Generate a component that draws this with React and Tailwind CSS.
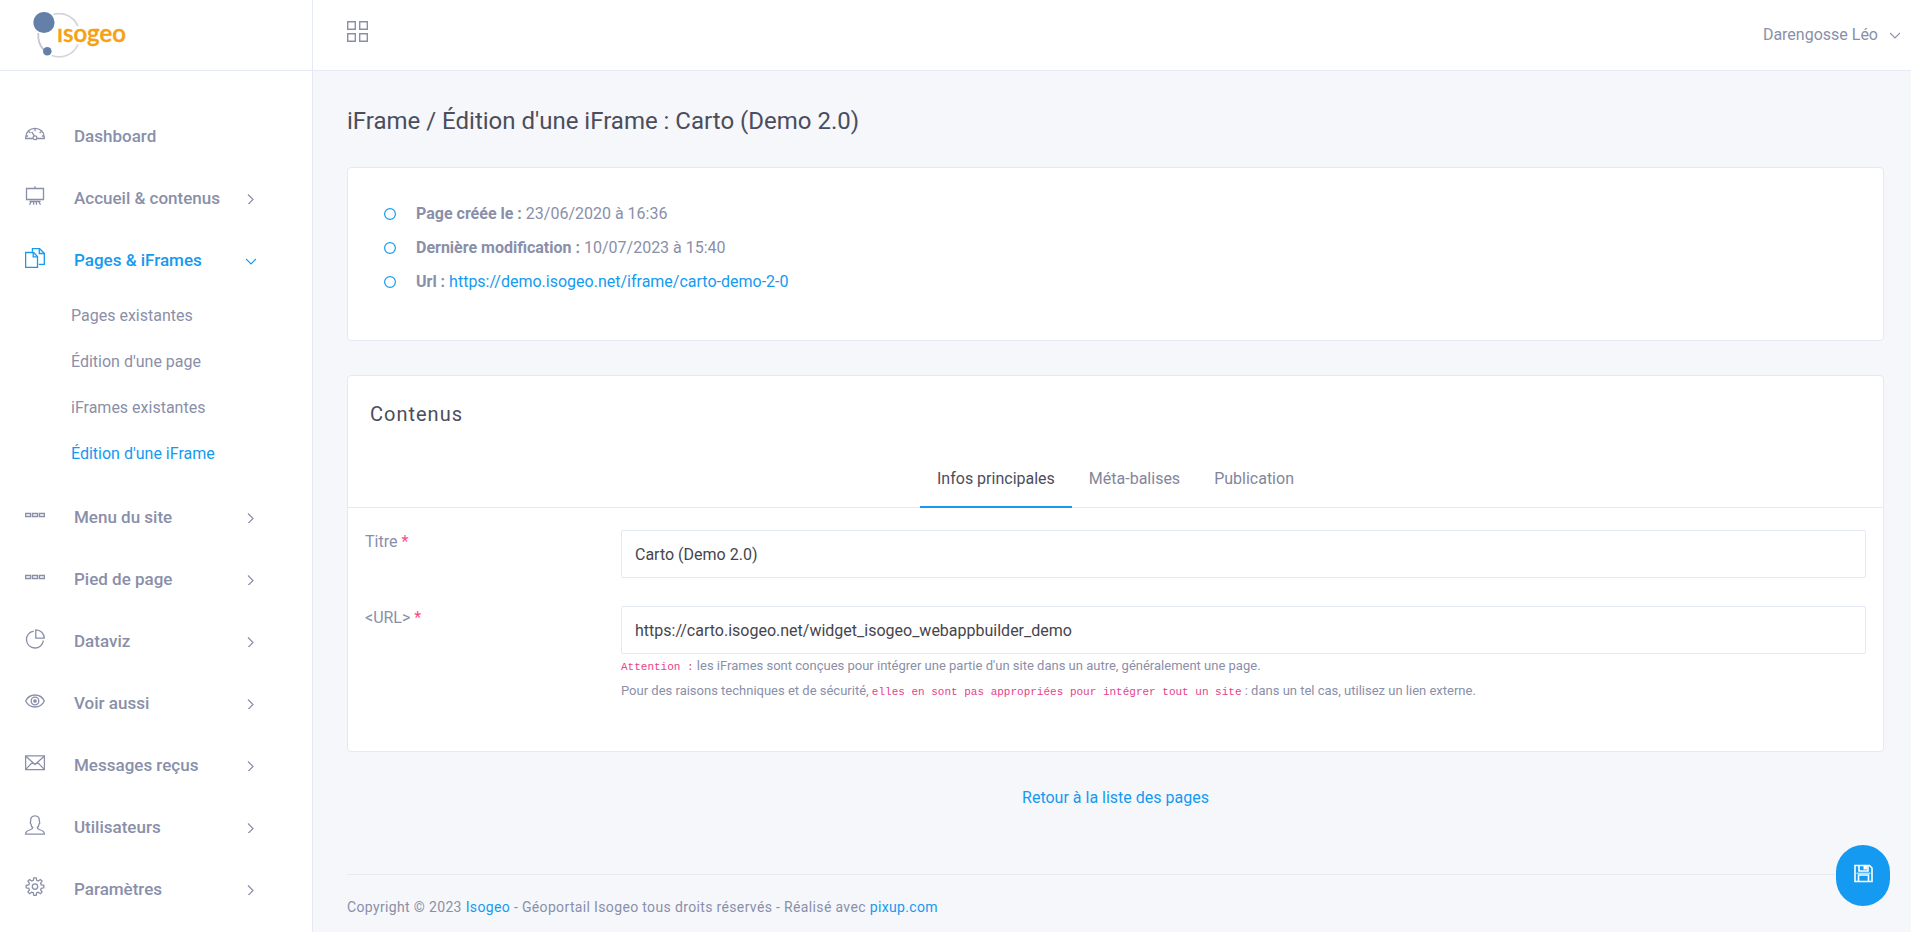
import React, { useState } from "react";
import clsx from "clsx";

function Icon({ children, className = "size-5", viewBox = "0 0 20 20", strokeWidth = "1.3" }) {
  return (
    <svg className={clsx("shrink-0", className)} viewBox={viewBox} fill="none" stroke="currentColor" strokeWidth={strokeWidth} aria-hidden="true">
      {children}
    </svg>
  );
}

const ICONS = {
  gauge: (
    <>
      <path d="M7.9 14.5H.7v-1.2C.7 8 4.9 4.3 10 4.3s9.3 3.7 9.3 9v1.2h-7.2" />
      <circle cx="10" cy="13.7" r="1.9" />
      <path d="M9.3 11.9 6.7 7.8M10 4.5v2.8M3.6 7.5l1.8 1.6M16.4 7.5l-1.8 1.6M1 12h2.2M19 12h-2.2" />
    </>
  ),
  easel: (
    <path d="M1.5 2.5h17v11h-17zM10 .2v2.3M4.5 15.5h11M6.4 15.5l-1.9 3.3M13.6 15.5l1.9 3.3M8.6 15.5v3.3M11.4 15.5v3.3" />
  ),
  pages: (
    <>
      <path d="M.6 4.5h8l3.9 4v10.9H.6z" />
      <path d="M8.2 4.6v4.2h4.2" />
      <path d="M7.4 3.8V.7h7.2l4.7 4.6v11.1h-5.6" />
      <path d="M14.3.9v4.6h4.9" />
    </>
  ),
  menu: <path d="M.6 8.5h5v3h-5zM7.5 8.5h5v3h-5zM14.4 8.5h5v3h-5z" />,
  chart: (
    <>
      <path d="M8.7 2.1a8.5 8.5 0 1 0 9.7 9.4" />
      <path d="M10.8.8v8.4h8.5A8.5 8.5 0 0 0 10.8.8z" />
    </>
  ),
  eye: (
    <>
      <path d="M.7 10C2.5 6.2 5.9 4 10 4s7.5 2.2 9.3 6c-1.8 3.8-5.2 6-9.3 6S2.5 13.8.7 10z" />
      <circle cx="10" cy="10" r="3.8" />
      <circle cx="10" cy="10" r="1.2" fill="currentColor" />
    </>
  ),
  mail: (
    <>
      <path d="M.6 2.8h18.8v13.8H.6z" />
      <path d="m.8 3.2 9.2 8.3 9.2-8.3M.8 16.4l6.6-7M19.2 16.4l-6.6-7" />
    </>
  ),
  user: (
    <path d="M7.8 12.8c-1-.9-1.7-2.3-1.8-3.7-.8-.6-.9-1.6-.4-2.3C5.4 3.2 6.6.8 10 .8s4.6 2.4 4.4 6c.5.7.4 1.7-.4 2.3-.1 1.4-.8 2.8-1.8 3.7.1 1.2 1.3 1.6 3.2 2.2 2.4.7 4 1.8 4 4.2H.6c0-2.4 1.6-3.5 4-4.2 1.9-.6 3.1-1 3.2-2.2z" />
  ),
  gear: (
    <>
      <path d="M8.8.8h2.4l.5 2.6 1.5.6 2.2-1.5 1.7 1.7-1.5 2.2.6 1.5 2.6.5v2.4l-2.6.5-.6 1.5 1.5 2.2-1.7 1.7-2.2-1.5-1.5.6-.5 2.6H8.8l-.5-2.6-1.5-.6-2.2 1.5-1.7-1.7 1.5-2.2-.6-1.5-2.6-.5V8.400l2.600-.5.6-1.500-1.500-2.200 1.700-1.700L6.800 4l1.500-.6z" />
      <circle cx="10" cy="9.6" r="2.7" />
    </>
  ),
};

const NAV = [
  { label: "Dashboard", icon: "gauge", leaf: true },
  { label: "Accueil & contenus", icon: "easel" },
  {
    label: "Pages & iFrames",
    icon: "pages",
    children: ["Pages existantes", "Édition d'une page", "iFrames existantes", "Édition d'une iFrame"],
  },
  { label: "Menu du site", icon: "menu" },
  { label: "Pied de page", icon: "menu" },
  { label: "Dataviz", icon: "chart" },
  { label: "Voir aussi", icon: "eye" },
  { label: "Messages reçus", icon: "mail" },
  { label: "Utilisateurs", icon: "user" },
  { label: "Paramètres", icon: "gear" },
];

const TABS = ["Infos principales", "Méta-balises", "Publication"];

function Chevron({ down }) {
  return (
    <Icon className="size-2.5" viewBox="0 0 10 10" strokeWidth="1.2">
      <path d={down ? "M0 3l5 5 5-5" : "M2 .5l5 5-5 5"} />
    </Icon>
  );
}

function Logo() {
  return (
    <svg className="h-[50px] w-[100px]" viewBox="0 0 100 50" role="img" aria-label="isogeo">
      <g fill="none" stroke="#d3d6de" strokeWidth="1.8">
        <path d="M20.5 4.2c12-2 20.500 3 24.500 12" />
        <path d="M5.300 23c-.6 7.200 1.500 13 6 17.500" stroke="#c3c7d3" />
        <path d="M18.500 45.500c11 4 22-1 26.500-11" />
      </g>
      <circle cx="11" cy="12.500" r="10.600" fill="#6580a8" />
      <circle cx="14.300" cy="41.300" r="4.300" fill="#6580a8" />
      <text x="24" y="32" fill="#f7a011" stroke="#f7a011" strokeWidth=".4" fontSize="24" fontFamily="Lato, sans-serif" fontWeight="600">
        ısogeo
      </text>
    </svg>
  );
}

function NavItem({ item }) {
  const open = Boolean(item.children);
  return (
    <li>
      <a href="#" className={clsx("flex h-[62px] items-center pl-[25px] pr-14", open && "text-[#149af0]")}>
        <Icon className="mb-1.5 size-5">{ICONS[item.icon]}</Icon>
        <span className="ml-[29px] flex-1 text-[17px] font-medium">{item.label}</span>
        {!item.leaf && <Chevron down={open} />}
      </a>
      {open && (
        <ul className="pb-2.5 pl-[71px] pt-px">
          {item.children.map((label, index) => (
            <li key={label}>
              <a href="#" className={clsx("flex h-[46px] items-center", index === 3 && "text-[#149af0]")}>
                {label}
              </a>
            </li>
          ))}
        </ul>
      )}
    </li>
  );
}

function InfoRow({ label, children }) {
  return (
    <li className="flex items-center gap-5">
      <Icon className="size-3 text-[#149af0]" viewBox="0 0 12 12" strokeWidth="1.2">
        <circle cx="6" cy="6" r="5.4" />
      </Icon>
      <p>
        <strong className="font-bold">{label} :</strong> {children}
      </p>
    </li>
  );
}

function Field({ id, label, value, children }) {
  return (
    <div className="flex items-start">
      <label htmlFor={id} className="w-64 shrink-0">
        {label} <span className="text-[#ff4a80]">*</span>
      </label>
      <div className="min-w-0 flex-1">
        <input
          id={id}
          type="text"
          defaultValue={value}
          className="block h-12 w-full rounded-xs border border-[#e4e9f5] bg-white px-[13px] text-[#45454d] outline-none focus:border-[#149af0]"
        />
        {children}
      </div>
    </div>
  );
}

export default function App() {
  const [tab, setTab] = useState(TABS[0]);

  return (
    <div className="flex min-h-screen bg-[#f5f7fb] font-[Roboto,sans-serif] text-base text-[#8a8fa9]">
      <aside className="w-[313px] shrink-0 border-r border-[#e4e9f5] bg-white">
        <div className="flex h-[71px] items-center border-b border-[#e4e9f5] pl-[33px]">
          <a href="#">
            <Logo />
          </a>
        </div>
        <nav className="pt-[35px]">
          <ul>
            {NAV.map((item) => (
              <NavItem key={item.label} item={item} />
            ))}
          </ul>
        </nav>
      </aside>

      <div className="min-w-0 flex-1">
        <header className="flex h-[71px] items-center justify-between border-b border-[#e4e9f5] bg-white pl-[34px] pr-[11px]">
          <button type="button" aria-label="Menu" className="mb-2">
            <Icon className="size-[21px]" viewBox="0 0 21 21" strokeWidth="1.4">
              <path d="M.7.7h7.6v7.6H.7zM12.7.7h7.6v7.6h-7.6zM.7 12.7h7.6v7.6H.7zM12.7 12.7h7.6v7.6h-7.6z" />
            </Icon>
          </button>
          <button type="button" className="flex items-center gap-3">
            Darengosse Léo
            <Chevron down />
          </button>
        </header>

        <main className="pl-[34px] pr-[27px] pt-8">
          <h1 className="text-2xl leading-9 text-[#4c4d5c]">iFrame / Édition d'une iFrame : Carto (Demo 2.0)</h1>

          <section className="mt-7 rounded border border-[#e4e9f5] bg-white px-9 pb-[46px] pt-[34px]">
            <ul className="space-y-2.5">
              <InfoRow label="Page créée le">23/06/2020 à 16:36</InfoRow>
              <InfoRow label="Dernière modification">10/07/2023 à 15:40</InfoRow>
              <InfoRow label="Url">
                <a href="#" className="text-[#149af0]">
                  https://demo.isogeo.net/iframe/carto-demo-2-0
                </a>
              </InfoRow>
            </ul>
          </section>

          <section className="mt-[34px] rounded border border-[#e4e9f5] bg-white">
            <h2 className="px-[22px] pt-6 text-xl tracking-wider text-[#4c4d5c]">Contenus</h2>
            <div role="tablist" className="mt-6 flex justify-center border-b border-[#e4e9f5] text-[#83869b]">
              {TABS.map((label) => (
                <button
                  key={label}
                  type="button"
                  role="tab"
                  aria-selected={tab === label}
                  onClick={() => setTab(label)}
                  className={clsx(
                    "-mb-px h-14 border-b-2 px-[17px]",
                    tab === label ? "border-[#149af0] text-[#4c4d5c]" : "border-transparent",
                  )}
                >
                  {label}
                </button>
              ))}
            </div>
            <form className="space-y-7 px-[17px] pb-[47px] pt-[22px]" onSubmit={(event) => event.preventDefault()}>
              <Field id="title" label="Titre" value="Carto (Demo 2.0)" />
              <Field id="url" label="<URL>" value="https://carto.isogeo.net/widget_isogeo_webappbuilder_demo">
                <p className="text-[13px] leading-6">
                  <code className="font-['Liberation_Mono',monospace] text-[11px] text-[#e83e8c]">Attention :</code>{" "}
                  les iFrames sont conçues pour intégrer une partie d'un site dans un autre, généralement une page.
                  <br />
                  Pour des raisons techniques et de sécurité,{" "}
                  <code className="font-['Liberation_Mono',monospace] text-[11px] text-[#e83e8c]">
                    elles en sont pas appropriées pour intégrer tout un site
                  </code>{" "}
                  : dans un tel cas, utilisez un lien externe.
                </p>
              </Field>
            </form>
          </section>

          <p className="mt-[34px] text-center">
            <a href="#" className="text-[#149af0]">
              Retour à la liste des pages
            </a>
          </p>

          <footer className="mt-16 border-t border-[#e8eaf0] pb-4 pt-[22px] text-sm tracking-wide">
            Copyright © 2023{" "}
            <a href="#" className="text-[#149af0]">
              Isogeo
            </a>{" "}
            - Géoportail Isogeo tous droits réservés - Réalisé avec{" "}
            <a href="#" className="text-[#149af0]">
              pixup.com
            </a>
          </footer>
        </main>
      </div>

      <button
        type="button"
        aria-label="Enregistrer"
        className="fixed bottom-[26px] right-[21px] flex h-[61px] w-[54px] items-center justify-center rounded-full bg-[#149af0] text-white"
      >
        <Icon className="mb-1 size-[19px]" viewBox="0 0 19 19" strokeWidth="1.6">
          <path d="M1 1.5h14.5L18 4v13.5H1zM4.5 17v-6h10v6M5 1.5V7h9V1.5" />
          <path d="M9.5 1.5H13v4H9.5z" fill="currentColor" stroke="none" />
          <path d="M2.5 9.2h14" strokeWidth="1" />
        </Icon>
      </button>
    </div>
  );
}
